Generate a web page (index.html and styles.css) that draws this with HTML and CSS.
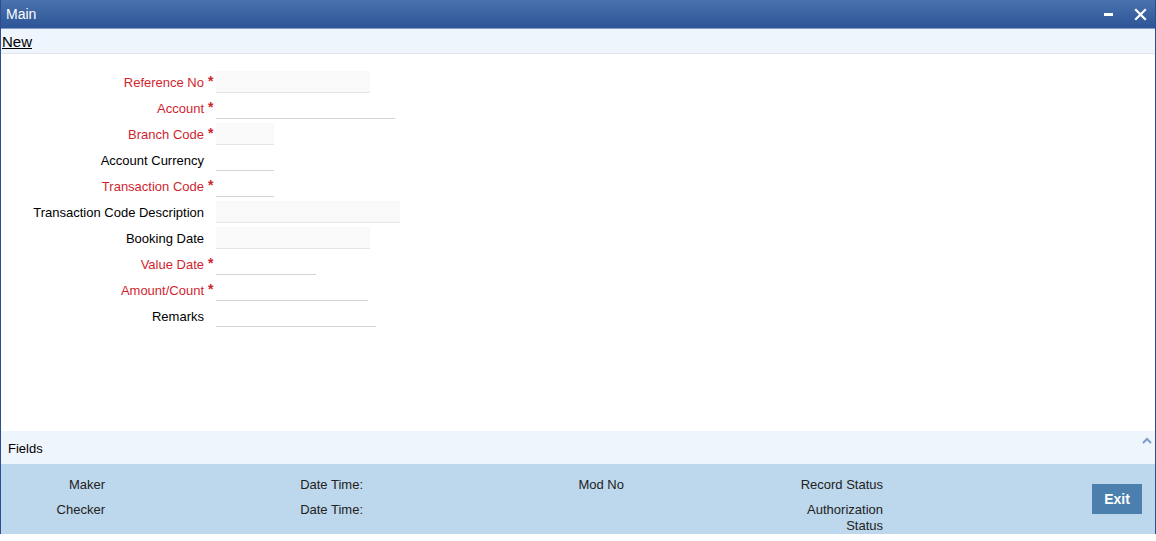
FILE: index.html
```html
<!DOCTYPE html>
<html>
<head>
<meta charset="utf-8">
<link rel="stylesheet" href="styles.css">
</head>
<body>
<div class="window">
  <div class="titlebar">
    <span class="title">Main</span>
    <div class="controls">
      <svg class="ico" width="12" height="12" viewBox="0 0 12 12"><rect x="1" y="5" width="9" height="3" fill="#fff"/></svg>
      <svg class="ico" width="13" height="13" viewBox="0 0 13 13"><path d="M2 2 L11 11 M11 2 L2 11" stroke="#fff" stroke-width="2.2" stroke-linecap="square"/></svg>
    </div>
  </div>
  <div class="toolbar"><span class="new">New</span></div>
  <div class="form">
    <div class="lbl req">Reference No</div><div class="star">*</div><div><div class="inp ro" style="width:154px"></div></div>
    <div class="lbl req">Account</div><div class="star">*</div><div><div class="inp" style="width:179px"></div></div>
    <div class="lbl req">Branch Code</div><div class="star">*</div><div><div class="inp ro" style="width:58px"></div></div>
    <div class="lbl">Account Currency</div><div class="star"></div><div><div class="inp" style="width:58px"></div></div>
    <div class="lbl req">Transaction Code</div><div class="star">*</div><div><div class="inp" style="width:58px"></div></div>
    <div class="lbl">Transaction Code Description</div><div class="star"></div><div><div class="inp ro" style="width:184px"></div></div>
    <div class="lbl">Booking Date</div><div class="star"></div><div><div class="inp ro" style="width:154px"></div></div>
    <div class="lbl req">Value Date</div><div class="star">*</div><div><div class="inp" style="width:100px"></div></div>
    <div class="lbl req">Amount/Count</div><div class="star">*</div><div><div class="inp" style="width:152px"></div></div>
    <div class="lbl">Remarks</div><div class="star"></div><div><div class="inp" style="width:160px"></div></div>
  </div>
  <div class="fields">
    <span>Fields</span>
    <svg class="caret" width="10" height="7" viewBox="0 0 10 7"><path d="M1 6 L5 2 L9 6" stroke="#7b9cc8" stroke-width="2" fill="none"/></svg>
  </div>
  <div class="audit">
    <div class="agrid">
      <div class="a1">Maker</div><div class="a2">Date Time:</div><div class="a3">Mod No</div><div class="a4">Record Status</div>
      <div class="a1">Checker</div><div class="a2">Date Time:</div><div class="a3"></div><div class="a4">Authorization<br>Status</div>
    </div>
    <button class="exit">Exit</button>
  </div>
</div>
</body>
</html>
```
FILE: styles.css
```css
html, body { margin: 0; padding: 0; background: #fff; }
body { font-family: "Liberation Sans", Arial, sans-serif; font-size: 13px; color: #000; }
.window {
  width: 1154px;
  height: 534px;
  border-left: 1px solid #2b4f8c;
  border-right: 1px solid #2b4f8c;
  display: flex;
  flex-direction: column;
  background: #fff;
}
.titlebar {
  height: 28px;
  background: linear-gradient(#4a72ae, #2d5597);
  border-bottom: 1px solid #7f9cc6;
  display: flex;
  align-items: center;
  justify-content: space-between;
  padding: 0 8px 0 5px;
  flex: none;
}
.title { color: #fff; font-size: 14px; }
.controls { display: flex; align-items: center; gap: 19px; }
.ico { display: block; }
.toolbar {
  height: 24px;
  background: #eef5fd;
  border-bottom: 1px solid #e2e6ea;
  display: flex;
  align-items: center;
  padding-left: 1px;
  flex: none;
}
.new { font-size: 15px; text-decoration: underline; color: #000; }
.form {
  flex: 1;
  display: grid;
  grid-template-columns: 203px 12px 1fr;
  grid-auto-rows: 22px;
  row-gap: 4px;
  align-content: start;
  padding-top: 17px;
}
.lbl { text-align: right; line-height: 22px; padding-top: 1px; }
.lbl.req { color: #d01f2f; }
.star { color: #d01f2f; font-size: 14px; line-height: 14px; padding-left: 4px; padding-top: 3px; font-weight: bold; }
.inp { height: 22px; box-sizing: border-box; border-bottom: 1px solid #d4d4d4; background: #fff; }
.inp.ro { background: #f9f9f9; border-bottom-color: #e6e6e6; }
.fields {
  height: 33px;
  background: #eef5fd;
  display: flex;
  align-items: center;
  justify-content: space-between;
  padding: 0 3px 0 7px;
  flex: none;
}
.fields span { padding-top: 2px; }
.caret { align-self: flex-start; margin-top: 6px; }
.audit {
  height: 70px;
  background: #bdd7ec;
  display: flex;
  justify-content: space-between;
  flex: none;
  color: #222;
}
.agrid {
  display: grid;
  grid-template-columns: 104px 258px 261px 259px;
  grid-template-rows: 16px auto;
  row-gap: 9px;
  padding-top: 13px;
  line-height: 16px;
  align-content: start;
}
.agrid > div { text-align: right; }
.exit {
  margin: 20px 13px 0 0;
  width: 50px;
  height: 30px;
  border: none;
  background: #4a7fae;
  color: #fff;
  font-family: "Liberation Sans", Arial, sans-serif;
  font-weight: bold;
  font-size: 14px;
  padding: 0;
}
```
